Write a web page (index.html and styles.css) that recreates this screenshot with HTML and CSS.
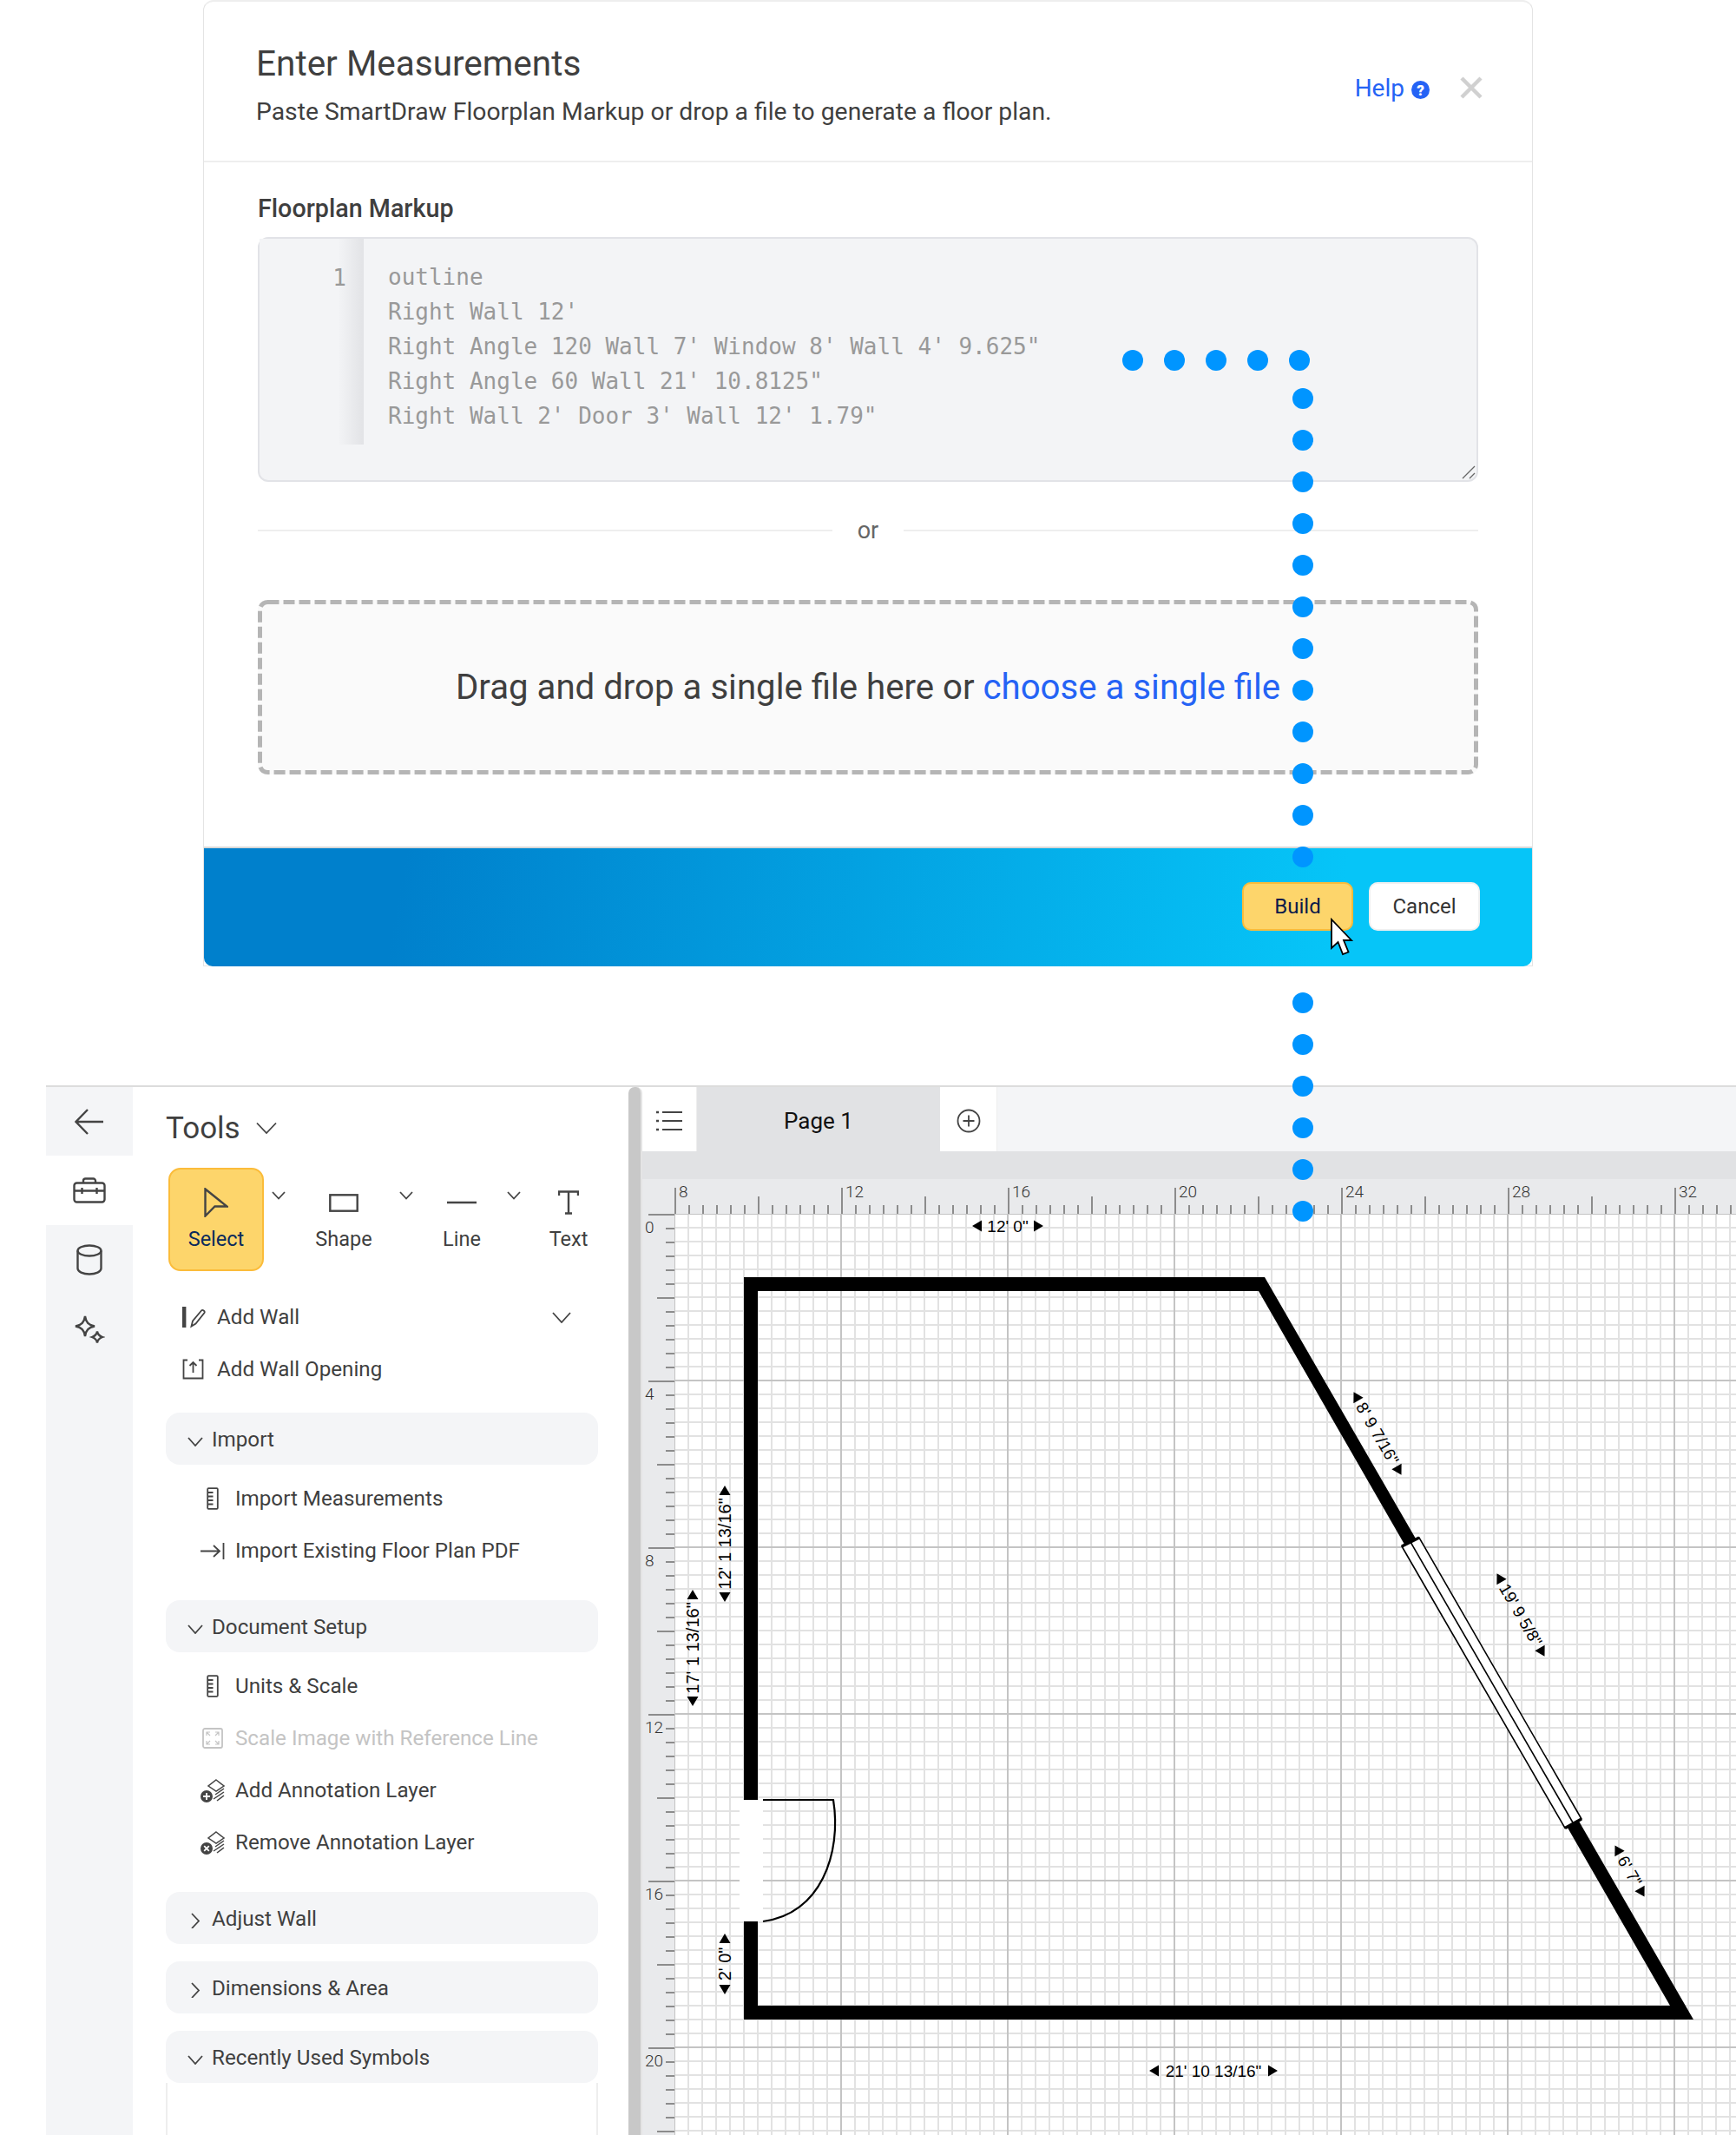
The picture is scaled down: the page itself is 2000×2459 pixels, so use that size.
FILE: index.html

```html
<!DOCTYPE html>
<html lang="en">
<head>
  <meta charset="UTF-8" />
  <meta name="viewport" content="width=device-width, initial-scale=1.0"/>
  <title>Enter Measurements</title>
  <link rel="stylesheet" href="styles.css">
</head>
<body>
  <!-- Import dialog -->
  <div class="modal">
    <div class="modal-head">
      <div>
        <h1 class="modal-title">Enter Measurements</h1>
        <p class="modal-sub">Paste SmartDraw Floorplan Markup or drop a file to generate a floor plan.</p>
      </div>
      <div class="head-actions">
        <a class="help">Help</a>
        <svg class="help-icon" width="21" height="21" viewBox="0 0 21 21"><circle cx="10.500" cy="10.500" r="10.500" fill="#2563f5"/><text x="10.500" y="16.500" text-anchor="middle" class="help-q">?</text></svg>
        <svg class="close-icon" width="26" height="26" viewBox="0 0 26 26"><path d="M2 2L24 24M24 2L2 24" stroke="#d0d0d0" stroke-width="4.500" fill="none"/></svg>
      </div>
    </div>
    <div class="modal-body">
      <div class="field-label">Floorplan Markup</div>
      <div class="editor">
        <div class="gutter">1</div>
        <pre class="code">outline
Right Wall 12'
Right Angle 120 Wall 7' Window 8' Wall 4' 9.625"
Right Angle 60 Wall 21' 10.8125"
Right Wall 2' Door 3' Wall 12' 1.79"</pre>
        <svg class="grip" width="16" height="16" viewBox="0 0 16 16"><path d="M1 15L15 1M9 15L15 9" stroke="#666" stroke-width="1.300" fill="none"/></svg>
      </div>
      <div class="or-row"><span>or</span></div>
      <div class="dropzone">
        <svg class="dash" width="1406" height="201" viewBox="0 0 1406 201"><rect x="2.500" y="2.500" width="1401" height="196" rx="9" fill="none" stroke="#b5b5b5" stroke-width="5" stroke-dasharray="13 5"/></svg>
        <span>Drag and drop a single file here or <a>choose a single file</a></span>
      </div>
    </div>
    <div class="modal-foot">
      <button class="btn btn-build">Build</button>
      <button class="btn">Cancel</button>
    </div>
  </div>

  <!-- Floor plan app -->
  <div class="app">
    <div class="rail">
      <div class="rail-item rail-first">
        <svg width="34" height="30" viewBox="0 0 34 30"><path d="M33 15H2M15 1L1.500 15L15 29" class="ic"/></svg>
      </div>
      <div class="rail-item active">
        <svg width="38" height="30" viewBox="0 0 38 30"><rect x="1.500" y="6.500" width="35" height="22" rx="3" class="ic"/><path d="M12 6.500V4a2.500 2.500 0 0 1 2.500-2.500h9A2.500 2.500 0 0 1 26 4V6.500M1.500 15.500H36.500M10.500 12V19M27.500 12V19" class="ic"/></svg>
      </div>
      <div class="rail-item">
        <svg width="30" height="36" viewBox="0 0 30 36"><path d="M1.500 7.500V28c0 3.500 6 6.500 13.500 6.500s13.500-3 13.500-6.500V7.500" class="ic"/><ellipse cx="15" cy="7.500" rx="13.500" ry="6" class="ic"/></svg>
      </div>
      <div class="rail-item">
        <svg width="36" height="34" viewBox="0 0 36 34"><path d="M13 2C14 9 17 12 24 13.500C17 15 14 18 13 25C12 18 9 15 2 13.500C9 12 12 9 13 2Z" class="ic"/><path d="M27 19.500C27.500 23 29 24.500 33 26C29 27.500 27.500 29 27 32.500C26.500 29 25 27.500 21 26C25 24.500 26.500 23 27 19.500Z" class="ic"/></svg>
      </div>
    </div>

    <div class="panel">
      <div class="tools-head">
        <span>Tools</span>
        <svg width="24" height="15" viewBox="0 0 24 15"><path d="M1 1.500L12 13L23 1.500" class="ic thin"/></svg>
      </div>
      <div class="tool-row">
        <div class="tool tool-select">
          <div class="tool-icon"><svg width="28" height="34" viewBox="0 0 28 34"><path d="M1.500 1.500L26.500 21.500H12.500L1.500 32.500Z" class="ic"/></svg></div>
          <div class="tool-label">Select</div>
        </div>
        <div class="tool-chev chev-a"><svg width="16" height="10" viewBox="0 0 16 10"><path d="M1 1L8 8.500L15 1" class="ic thin"/></svg></div>
        <div class="tool tool-shape">
          <div class="tool-icon"><svg width="34" height="21" viewBox="0 0 34 21"><rect x="1.300" y="1.300" width="31.400" height="18.400" class="ic"/></svg></div>
          <div class="tool-label">Shape</div>
        </div>
        <div class="tool-chev chev-b"><svg width="16" height="10" viewBox="0 0 16 10"><path d="M1 1L8 8.500L15 1" class="ic thin"/></svg></div>
        <div class="tool tool-line">
          <div class="tool-icon"><svg width="34" height="4" viewBox="0 0 34 4"><path d="M0 2H34" class="ic"/></svg></div>
          <div class="tool-label">Line</div>
        </div>
        <div class="tool-chev chev-c"><svg width="16" height="10" viewBox="0 0 16 10"><path d="M1 1L8 8.500L15 1" class="ic thin"/></svg></div>
        <div class="tool tool-text">
          <div class="tool-icon"><svg width="24" height="28" viewBox="0 0 24 28"><path d="M1 6V1.500H23V6M12 1.500V26.500M8 26.500H16" class="ic"/></svg></div>
          <div class="tool-label">Text</div>
        </div>
      </div>

      <div class="wall-rows">
        <div class="wall-row">
          <span class="wall-icon"><svg width="28" height="26" viewBox="0 0 28 26"><path d="M2.200 1V25" stroke="#444" stroke-width="4.400" fill="none"/><path d="M10.500 23.500L12 17.500L22 5.500C23.500 4 26.500 6 25.500 8L15.500 20.500Z" class="ic thin"/></svg></span>
          <span>Add Wall</span>
          <svg class="wall-chev" width="22" height="13" viewBox="0 0 22 13"><path d="M1 1L11 12L21 1" class="ic thin"/></svg>
        </div>
        <div class="wall-row">
          <span class="wall-icon"><svg width="25" height="24" viewBox="0 0 25 24"><path d="M6 1.500H1.500V22.500H23.500V1.500H19M12.500 16V4M8.500 8L12.500 4L16.500 8" class="ic thin"/></svg></span>
          <span>Add Wall Opening</span>
        </div>
      </div>

      <div class="section open">
        <div class="section-head">
          <svg class="sec-chev" width="18" height="11" viewBox="0 0 18 11"><path d="M1 1L9 10L17 1" class="ic thin"/></svg>
          <span>Import</span>
        </div>
        <div class="section-items">
          <div class="item">
            <span class="item-icon"><svg width="14" height="26" viewBox="0 0 14 26"><rect x="1.200" y="1.200" width="11.600" height="23.600" rx="1" class="ic thin"/><path d="M1.500 6H7.500M1.500 10.500H7.500M1.500 15H7.500M1.500 19.500H7.500" class="ic thin"/></svg></span>
            <span>Import Measurements</span>
          </div>
          <div class="item">
            <span class="item-icon"><svg width="28" height="19" viewBox="0 0 28 19"><path d="M0 9.500H22M15 3L22 9.500L15 16M26.500 0V19" class="ic thin"/></svg></span>
            <span>Import Existing Floor Plan PDF</span>
          </div>
        </div>
      </div>

      <div class="section open">
        <div class="section-head">
          <svg class="sec-chev" width="18" height="11" viewBox="0 0 18 11"><path d="M1 1L9 10L17 1" class="ic thin"/></svg>
          <span>Document Setup</span>
        </div>
        <div class="section-items">
          <div class="item">
            <span class="item-icon"><svg width="14" height="26" viewBox="0 0 14 26"><rect x="1.200" y="1.200" width="11.600" height="23.600" rx="1" class="ic thin"/><path d="M1.500 6H7.500M1.500 10.500H7.500M1.500 15H7.500M1.500 19.500H7.500" class="ic thin"/></svg></span>
            <span>Units &amp; Scale</span>
          </div>
          <div class="item disabled">
            <span class="item-icon"><svg width="24" height="24" viewBox="0 0 24 24"><rect x="1" y="1" width="22" height="22" rx="2" class="ic thin"/><path d="M5 9V5H9M15 5H19V9M5 15V19H9M15 19H19V15M5 5L9 9M19 5L15 9M5 19L9 15M19 19L15 15" class="ic thin hair"/></svg></span>
            <span>Scale Image with Reference Line</span>
          </div>
          <div class="item">
            <span class="item-icon"><svg width="28" height="27" viewBox="0 0 28 27"><use href="#layers"/><circle cx="7" cy="20" r="7" fill="#444"/><path d="M7 16V24M3 20H11" stroke="#fff" stroke-width="1.800"/></svg></span>
            <span>Add Annotation Layer</span>
          </div>
          <div class="item">
            <span class="item-icon"><svg width="28" height="27" viewBox="0 0 28 27"><use href="#layers"/><circle cx="7" cy="20" r="7" fill="#444"/><path d="M4.200 17.200L9.800 22.800M9.800 17.200L4.200 22.800" stroke="#fff" stroke-width="1.800"/></svg></span>
            <span>Remove Annotation Layer</span>
          </div>
        </div>
      </div>

      <div class="section">
        <div class="section-head">
          <svg class="sec-chev" width="18" height="18" viewBox="0 0 18 18"><path d="M5 1L13 9.500L5 18" class="ic thin"/></svg>
          <span>Adjust Wall</span>
        </div>
      </div>
      <div class="section">
        <div class="section-head">
          <svg class="sec-chev" width="18" height="18" viewBox="0 0 18 18"><path d="M5 1L13 9.500L5 18" class="ic thin"/></svg>
          <span>Dimensions &amp; Area</span>
        </div>
      </div>
      <div class="section">
        <div class="section-head">
          <svg class="sec-chev" width="18" height="11" viewBox="0 0 18 11"><path d="M1 1L9 10L17 1" class="ic thin"/></svg>
          <span>Recently Used Symbols</span>
        </div>
      </div>
      <div class="symbols"></div>
    </div>

    <div class="panel-scroll"></div>

    <div class="canvas">
      <div class="tabs">
        <div class="tab-btn">
          <svg width="30" height="24" viewBox="0 0 30 24"><path d="M7 2H30M7 12H30M7 22H30" class="ic thin"/><path d="M0 2H3M0 12H3M0 22H3" class="ic"/></svg>
        </div>
        <div class="tab-page">Page 1</div>
        <div class="tab-btn tab-add">
          <svg width="28" height="28" viewBox="0 0 28 28"><circle cx="14" cy="14" r="12.500" class="ic thin"/><path d="M14 7.500V20.500M7.500 14H20.500" class="ic thin"/></svg>
        </div>
      </div>
      <div class="tab-strip"></div>
      <div class="ruler-top">
        <div class="ruler-corner"></div>
        <div class="ruler-h">
          <span>8</span><span>12</span><span>16</span><span>20</span><span>24</span><span>28</span><span>32</span>
        </div>
      </div>
      <div class="canvas-main">
        <div class="ruler-v">
          <span>0</span><span>4</span><span>8</span><span>12</span><span>16</span><span>20</span>
        </div>
        <div class="grid">
          <svg class="plan" viewBox="777 1398 1223 1061" width="1223" height="1061">
            <path fill-rule="evenodd" d="M857 1471H1457L1951 2326H857ZM873 1487V2310H1924L1450 1487Z" fill="#000"/>
            <!-- door -->
            <rect x="852" y="2073" width="27" height="140" fill="#fff"/>
            <path d="M879 2073H960C970 2135 945 2205 879 2213" fill="none" stroke="#000" stroke-width="2.200"/>
            <!-- window -->
            <path d="M1615 1781L1635 1771L1822 2095L1803 2105.500Z" fill="#fff" stroke="#000" stroke-width="1.600"/>
            <path d="M1625 1776L1812.500 2100" stroke="#000" stroke-width="1.600"/>
            <path d="M1615 1781L1635 1771M1803 2105.500L1822 2095" stroke="#000" stroke-width="3.500"/>
            <!-- dimensions -->
            <g class="dim flat" transform="translate(1161 1412)">
              <text y="7">12' 0"</text><path d="M-41 0L-30 -6.500V6.500ZM41 0L30 -6.500V6.500Z"/>
            </g>
            <g class="dim flat" transform="translate(1398 2385)">
              <text y="7">21' 10 13/16"</text><path d="M-74 0L-63 -6.500V6.500ZM74 0L63 -6.500V6.500Z"/>
            </g>
            <g class="dim" transform="translate(835 1778) rotate(-90)">
              <text y="7">12' 1 13/16"</text><path d="M-67 0L-56 -6.500V6.500ZM67 0L56 -6.500V6.500Z"/>
            </g>
            <g class="dim" transform="translate(798 1898) rotate(-90)">
              <text y="7">17' 1 13/16"</text><path d="M-67 0L-56 -6.500V6.500ZM67 0L56 -6.500V6.500Z"/>
            </g>
            <g class="dim" transform="translate(835 2262) rotate(-90)">
              <text y="7">2' 0"</text><path d="M-35 0L-24 -6.500V6.500ZM35 0L24 -6.500V6.500Z"/>
            </g>
            <g class="dim slant" transform="translate(1587 1651) rotate(60)">
              <text y="6.500">8' 9 7/16"</text><path d="M-55 0L-44 -6.500V6.500ZM55 0L44 -6.500V6.500Z"/>
            </g>
            <g class="dim slant" transform="translate(1752 1860) rotate(60)">
              <text y="6.500">19' 9 5/8"</text><path d="M-55 0L-44 -6.500V6.500ZM55 0L44 -6.500V6.500Z"/>
            </g>
            <g class="dim slant" transform="translate(1877.500 2155) rotate(60)">
              <text y="6.500">6' 7"</text><path d="M-34 0L-23 -6.500V6.500ZM34 0L23 -6.500V6.500Z"/>
            </g>
          </svg>
        </div>
      </div>
    </div>
  </div>

  <!-- Dotted guide and mouse pointer sitting above everything -->
  <svg class="guide" viewBox="0 0 2000 2459" width="2000" height="2459">
    <g fill="#0095ff">
      <circle cx="1305" cy="415" r="12"/><circle cx="1353" cy="415" r="12"/><circle cx="1401" cy="415" r="12"/><circle cx="1449" cy="415" r="12"/><circle cx="1497" cy="415" r="12"/>
      <circle cx="1501" cy="459" r="12"/><circle cx="1501" cy="507" r="12"/><circle cx="1501" cy="555" r="12"/><circle cx="1501" cy="603" r="12"/><circle cx="1501" cy="651" r="12"/><circle cx="1501" cy="699" r="12"/><circle cx="1501" cy="747" r="12"/><circle cx="1501" cy="795" r="12"/><circle cx="1501" cy="843" r="12"/><circle cx="1501" cy="891" r="12"/><circle cx="1501" cy="939" r="12"/><circle cx="1501" cy="987" r="12"/>
      <circle cx="1501" cy="1155" r="12"/><circle cx="1501" cy="1203" r="12"/><circle cx="1501" cy="1251" r="12"/><circle cx="1501" cy="1299" r="12"/><circle cx="1501" cy="1347" r="12"/><circle cx="1501" cy="1395" r="12"/>
    </g>
    <path d="M1534 1059V1092L1541.500 1085L1547 1099L1553.500 1096.500L1548 1083H1557Z" fill="#fff" stroke="#000" stroke-width="1.800"/>
  </svg>

  <svg class="defs" width="0" height="0">
    <defs>
      <g id="layers" fill="none" stroke="#444" stroke-width="1.500">
        <path d="M18 1L27 8L18 14L9 8Z"/>
        <path d="M27 11L17 18M27 15L15 23M27 19L19 25"/>
      </g>
    </defs>
  </svg>
</body>
</html>
```

FILE: styles.css

```css
* {
  box-sizing: border-box;
}
html, body {
  margin: 0;
  padding: 0;
}
body {
  position: relative;
  width: 2000px;
  height: 2459px;
  overflow: hidden;
  background: #fff;
  color: #3f3f3f;
  font-family: Roboto, "Noto Sans", sans-serif;
}
.ic {
  fill: none;
  stroke: #444;
  stroke-width: 2.4;
}
.ic.thin {
  stroke-width: 1.8;
}
.ic.hair {
  stroke-width: 1.2;
}

/* Dialog */
.modal {
  width: 1532px;
  height: 1113px;
  margin-left: 234px;
  background: #fff;
  border: 1px solid #e4e4e4;
  border-top: 2px solid #eee;
  border-radius: 12px 12px 0 0;
}
.modal-head {
  display: flex;
  justify-content: space-between;
  height: 185px;
  padding: 48px 57px 0 60px;
  border-bottom: 2px solid #eeeeee;
}
.modal-title {
  margin: 0;
  font-size: 40.500px;
  font-weight: 400;
  line-height: 46px;
}
.modal-sub {
  margin: 13px 0 0;
  font-size: 28.300px;
  line-height: 40px;
}
.head-actions {
  display: flex;
  align-items: center;
  height: 60px;
  margin-top: 21px;
}
.help {
  color: #2563f5;
  font-size: 28px;
}
.help-icon {
  margin-left: 8px;
  margin-top: 4px;
}
.help-q {
  fill: #fff;
  font-size: 17px;
  font-weight: 900;
}
.close-icon {
  margin-left: 35px;
}
.modal-body {
  padding: 0 62px;
}
.field-label {
  margin-top: 33px;
  font-size: 28.700px;
  font-weight: 500;
  line-height: 40px;
}
.editor {
  position: relative;
  display: flex;
  height: 282px;
  margin-top: 13px;
  background: #f3f4f6;
  border: 2px solid #e2e3e7;
  border-radius: 12px;
}
.gutter {
  flex: none;
  width: 120px;
  height: 237px;
  padding: 25px 20px 0 0;
  color: #999;
  text-align: right;
  font-family: "DejaVu Sans Mono", monospace;
  font-size: 26px;
  line-height: 40px;
  background: linear-gradient(to right, #f3f4f6 75%, #e2e3e6);
}
.code {
  margin: 0;
  padding: 24px 0 0 28px;
  color: #999;
  font-family: "DejaVu Sans Mono", monospace;
  font-size: 26px;
  line-height: 40px;
}
.grip {
  position: absolute;
  right: 1px;
  bottom: 1px;
}
.or-row {
  display: flex;
  align-items: center;
  height: 40px;
  margin-top: 36px;
  color: #666;
  font-size: 27px;
}
.or-row::before, .or-row::after {
  content: "";
  flex: 1;
  height: 2px;
  background: #eeeeee;
}
.or-row span {
  width: 82px;
  text-align: center;
}
.dropzone {
  position: relative;
  display: flex;
  justify-content: center;
  align-items: center;
  height: 201px;
  margin-top: 60px;
  background: #fafafa;
  border-radius: 10px;
  font-size: 40.200px;
}
.dash {
  position: absolute;
  left: 0;
  top: 0;
}
.dropzone a {
  color: #2563f5;
}
.modal-foot {
  display: flex;
  justify-content: flex-end;
  gap: 18px;
  height: 138px;
  margin-top: 83px;
  padding: 39px 60px 0 0;
  background: linear-gradient(100deg, #0080cc 15%, #06c5f8 85%);
  border-top: 2px solid #d8d8d8;
  border-radius: 0 0 10px 10px;
}
.btn {
  width: 128px;
  height: 56px;
  padding: 0;
  background: #fff;
  border: 2px solid #f0f0f0;
  border-radius: 10px;
  color: #333;
  font-family: inherit;
  font-size: 24px;
}
.btn-build {
  background: #fdd56b;
  border-color: #fbbc3a;
  color: #0b1b4a;
}

/* App */
.app {
  display: flex;
  height: 1209px;
  margin-top: 137px;
  margin-left: 53px;
  border-top: 2px solid #dcdcdc;
}
.rail {
  flex: none;
  width: 100px;
  background: #f4f5f7;
}
.rail-item {
  display: flex;
  justify-content: center;
  align-items: center;
  height: 80px;
}
.rail-first {
  height: 79px;
}
.rail-item.active {
  background: #fff;
}
.panel {
  flex: none;
  display: flex;
  flex-direction: column;
  width: 571px;
  padding: 0 35px 0 38px;
}
.tools-head {
  display: flex;
  align-items: center;
  gap: 18px;
  height: 93px;
  padding: 2px 0 0 0;
  font-size: 35px;
}
.tool-row {
  display: flex;
  height: 119px;
  margin-left: 3px;
}
.tool {
  flex: none;
  padding-top: 22px;
  text-align: center;
}
.tool-select {
  width: 110px;
  background: #fdd56b;
  border: 2px solid #fbbc3a;
  border-radius: 14px;
  color: #0b2a5c;
  padding-top: 20px;
}
.tool-shape { width: 116px; }
.tool-line { width: 100px; }
.tool-text { width: 106px; }
.tool-icon {
  display: flex;
  justify-content: center;
  align-items: center;
  height: 36px;
}
.tool-label {
  margin-top: 9px;
  font-size: 23.500px;
  line-height: 30px;
}
.tool-chev {
  flex: none;
  display: flex;
  justify-content: center;
  padding-top: 27px;
}
.chev-a { width: 34px; }
.chev-b { width: 28px; }
.chev-c { width: 20px; }
.wall-rows {
  margin-top: 23px;
}
.wall-row {
  display: flex;
  align-items: center;
  height: 60px;
  padding-left: 19px;
  font-size: 24.200px;
}
.wall-icon {
  display: flex;
  width: 40px;
}
.wall-chev {
  margin-left: auto;
  margin-right: 31px;
}
.section {
  margin-top: 20px;
}
.section.open {
  margin-bottom: 7px;
}
.section-head {
  display: flex;
  align-items: center;
  gap: 10px;
  height: 60px;
  padding: 2px 0 0 25px;
  background: #f4f5f7;
  border-radius: 16px;
  font-size: 24.200px;
}
.sec-chev {
  flex: none;
  margin-top: 4px;
}
.section-items {
  padding-top: 9px;
}
.item {
  display: flex;
  align-items: center;
  height: 60px;
  padding-left: 40px;
  font-size: 24.200px;
}
.item-icon {
  display: flex;
  justify-content: center;
  width: 28px;
  margin-right: 12px;
}
.item.disabled {
  color: #c4c4c4;
}
.item.disabled .ic {
  stroke: #c4c4c4;
}
.symbols {
  flex: 1;
  border-left: 2px solid #eeeeee;
  border-right: 2px solid #eeeeee;
}
.panel-scroll {
  flex: none;
  width: 16px;
  background: #c8c8c8;
  border-right: 2px solid #e4e4e4;
  border-radius: 7px 7px 0 0;
}

/* Canvas */
.canvas {
  flex: 1;
  display: flex;
  flex-direction: column;
  min-width: 0;
}
.tabs {
  flex: none;
  display: flex;
  height: 74px;
  background: #f4f5f7;
}
.tab-btn {
  display: flex;
  justify-content: center;
  align-items: center;
  width: 63px;
  padding-top: 3px;
  background: #fff;
  border-right: 1px solid #eeeeee;
}
.tab-add {
  width: 66px;
}
.tab-page {
  display: flex;
  justify-content: center;
  align-items: center;
  width: 280px;
  padding-top: 3px;
  background: #e1e2e4;
  color: #111;
  font-size: 26px;
}
.tab-strip {
  flex: none;
  height: 32px;
  background: #e1e2e4;
}
.ruler-top {
  flex: none;
  display: flex;
  height: 40px;
  background: #e9eaec;
}
.ruler-corner {
  flex: none;
  width: 37px;
}
.ruler-h {
  flex: 1;
  display: flex;
  overflow: hidden;
  background-image:
    linear-gradient(90deg, #8c8c8c 2px, transparent 2px),
    linear-gradient(90deg, #8c8c8c 2px, transparent 2px),
    linear-gradient(90deg, #8c8c8c 2px, transparent 2px);
  background-size: 192px 30px, 96px 20px, 16px 10px;
  background-repeat: repeat-x;
  background-position: 0 bottom;
}
.ruler-h span {
  flex: none;
  width: 192px;
  padding: 3px 0 0 5px;
  color: #333;
  font-size: 19px;
  font-weight: 300;
  line-height: 24px;
}
.canvas-main {
  flex: 1;
  display: flex;
  min-height: 0;
}
.ruler-v {
  flex: none;
  width: 37px;
  overflow: hidden;
  background-color: #e9eaec;
  background-image:
    linear-gradient(#8c8c8c 2px, transparent 2px),
    linear-gradient(#8c8c8c 2px, transparent 2px),
    linear-gradient(#8c8c8c 2px, transparent 2px);
  background-size: 30px 192px, 20px 96px, 10px 16px;
  background-repeat: repeat-y;
  background-position: right 0;
}
.ruler-v span {
  display: block;
  height: 192px;
  padding: 4px 0 0 3px;
  color: #333;
  font-size: 19px;
  font-weight: 300;
  line-height: 24px;
}
.grid {
  flex: 1;
  position: relative;
  overflow: hidden;
  background-color: #fff;
  background-image:
    linear-gradient(90deg, #c4c4c4 2px, transparent 2px),
    linear-gradient(#c4c4c4 2px, transparent 2px),
    linear-gradient(90deg, #e2e2e2 2px, transparent 2px),
    linear-gradient(#e2e2e2 2px, transparent 2px);
  background-size: 192px 192px, 192px 192px, 16px 16px, 16px 16px;
  background-position: -1px -1px;
}
.plan {
  position: absolute;
  left: 0;
  top: 0;
}
.dim text {
  font-family: "Liberation Sans", Arial, sans-serif;
  font-size: 20px;
  text-anchor: middle;
  fill: #000;
}
.dim.flat text {
  font-size: 19px;
}
.dim.slant text {
  font-size: 19px;
}
.guide {
  position: absolute;
  left: 0;
  top: 0;
  pointer-events: none;
}
.defs {
  position: absolute;
}
```
